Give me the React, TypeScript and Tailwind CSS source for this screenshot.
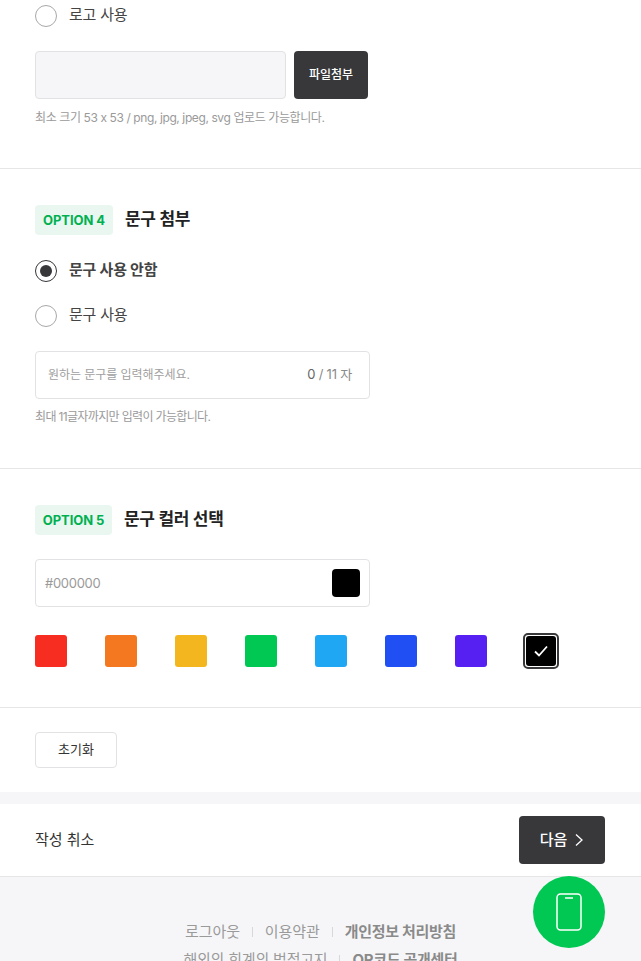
import React from "react";

function Badge({ n, w }: { n: number; w: string }) {
  return (
    <span className={`flex h-[30px] ${w} items-center justify-center rounded-[4px] bg-[#e9f7f0] pt-[1px] text-[13px] font-bold tracking-[-0.1px] text-[#00b050]`}>
      OPTION {n}
    </span>
  );
}
function Radio({ on, label }: { on?: boolean; label: string }) {
  return (
    <div className="flex h-[22px] items-center gap-[12px]">
      <span className={`flex h-[22px] w-[22px] items-center justify-center rounded-full border ${on ? "border-[#36363a]" : "border-[#a8a8a8]"} bg-white`}>
        {on && <span className="h-[12px] w-[12px] rounded-full bg-[#38383b]" />}
      </span>
      <span className={`-mt-[3px] text-[15px] leading-[20px] tracking-[-0.2px] text-[#444] ${on ? "font-bold" : "font-normal"}`}>{label}</span>
    </div>
  );
}
const COLORS = ["#f62d20", "#f3781f", "#f3b61f", "#00c853", "#1fa7f3", "#2050f3", "#5720f3"];

export default function App() {
  return (
    <div className="relative h-[961px] w-[641px] overflow-hidden bg-white font-['Inter','Noto_Sans_CJK_KR',sans-serif]">
      <section className="h-[169px] border-b border-[#e6e6e6] px-[35px] pt-[5px]">
        <Radio label="로고 사용" />
        <div className="mt-[24px] flex gap-[8px]">
          <div className="h-[48px] w-[251px] rounded-[4px] border border-[#e2e2e4] bg-[#f6f6f8]" />
          <button className="h-[48px] w-[74px] rounded-[4px] bg-[#38383b] text-[12px] font-medium text-white">파일첨부</button>
        </div>
        <p className="mt-[10px] text-[12px] leading-[18px] tracking-[-0.4px] text-[#9a9a9a]">최소 크기 53 x 53 / png, jpg, jpeg, svg 업로드 가능합니다.</p>
      </section>

      <section className="h-[300px] border-b border-[#e6e6e6] px-[35px] pt-[36px]">
        <div className="flex items-center gap-[12px]">
          <Badge n={4} w="w-[78px]" />
          <h2 className="text-[17px] font-bold tracking-[-0.3px] text-[#222]">문구 첨부</h2>
        </div>
        <div className="mt-[25px]"><Radio on label="문구 사용 안함" /></div>
        <div className="mt-[23px]"><Radio label="문구 사용" /></div>
        <div className="mt-[24px] flex h-[48px] w-[335px] items-center justify-between rounded-[4px] border border-[#e2e2e4] pl-[12px] pr-[17px]">
          <span className="text-[12px] tracking-[-0.05px] text-[#a0a0a0]">원하는 문구를 입력해주세요.</span>
          <span className="text-[13px] tracking-[-0.2px] text-[#8a8a8a]"><span className="text-[#666]">0</span> / 11 자</span>
        </div>
        <p className="mt-[9px] text-[12px] leading-[18px] tracking-[-0.65px] text-[#9a9a9a]">최대 11글자까지만 입력이 가능합니다.</p>
      </section>

      <section className="h-[239px] border-b border-[#e6e6e6] px-[35px] pt-[36px]">
        <div className="flex items-center gap-[12px]">
          <Badge n={5} w="w-[77px]" />
          <h2 className="text-[17px] font-bold tracking-[-0.3px] text-[#222]">문구 컬러 선택</h2>
        </div>
        <div className="mt-[24px] flex h-[48px] w-[335px] items-center justify-between rounded-[4px] border border-[#e2e2e4] px-[9px]">
          <span className="pt-[2px] text-[13px] tracking-[-0.3px] text-[#9a9a9a]">#000000</span>
          <span className="h-[28px] w-[28px] rounded-[4px] bg-black" />
        </div>
        <div className="mt-[26px] flex items-center">
          {COLORS.map((c) => (
            <span key={c} className="mr-[38px] h-[32px] w-[32px] rounded-[3px]" style={{ background: c }} />
          ))}
          <span className="-ml-[2px] flex h-[36px] w-[36px] items-center justify-center rounded-[5px] border-2 border-[#38383b] bg-white">
            <span className="flex h-[30px] w-[30px] items-center justify-center rounded-[3px] bg-black">
              <svg width="16" height="14" viewBox="0 0 16 14" fill="none" stroke="white" strokeWidth="1.8">
                <path d="M2 7.5 L6 11.5 L14 2.5" />
              </svg>
            </span>
          </span>
        </div>
      </section>

      <section className="h-[84px] px-[35px] pt-[24px]">
        <button className="h-[36px] w-[82px] rounded-[4px] border border-[#e2e2e4] bg-white text-[13px] text-[#333]">초기화</button>
      </section>
      <div className="h-[12px] bg-[#f6f6f8]" />
      <section className="flex h-[73px] items-center justify-between border-b border-[#e6e6e6] pl-[35px] pr-[36px]">
        <span className="text-[15px] text-[#333]">작성 취소</span>
        <button className="flex h-[48px] w-[86px] items-center justify-center gap-[7px] rounded-[4px] bg-[#38383b] text-[15px] font-medium text-white">
          다음
          <svg width="10" height="14" viewBox="0 0 10 14" fill="none" stroke="white" strokeWidth="1.3"><path d="M2 1.5 L8 7 L2 12.5" /></svg>
        </button>
      </section>
      <footer className="h-[100px] bg-[#f6f6f8] pt-[45px] text-center text-[15px] leading-[20px] tracking-[-0.1px] text-[#9a9a9a]">
        <div className="flex items-center justify-center gap-[12px]">
          <span>로그아웃</span><span className="h-[10px] w-px bg-[#d8d8d8]" />
          <span>이용약관</span><span className="h-[10px] w-px bg-[#d8d8d8]" />
          <span className="font-bold tracking-[-0.3px] text-[#8a8a8a]">개인정보 처리방침</span>
        </div>
        <div className="mt-[8px] flex items-center justify-center gap-[12px]">
          <span className="tracking-[-0.2px]">해외의 회계의 법정고지</span><span className="h-[10px] w-px bg-[#d8d8d8]" />
          <span className="font-bold tracking-[-0.3px] text-[#8a8a8a]">QR코드 공개센터</span>
        </div>
      </footer>
      <button className="absolute left-[533px] top-[876px] flex h-[72px] w-[72px] items-center justify-center rounded-full bg-[#00c853]">
        <svg width="26" height="38" viewBox="0 0 26 38" fill="none" stroke="white" strokeWidth="1.5">
          <rect x="1" y="1" width="24" height="36" rx="3.5" />
          <path d="M9 5 H17" />
        </svg>
      </button>
    </div>
  );
}
